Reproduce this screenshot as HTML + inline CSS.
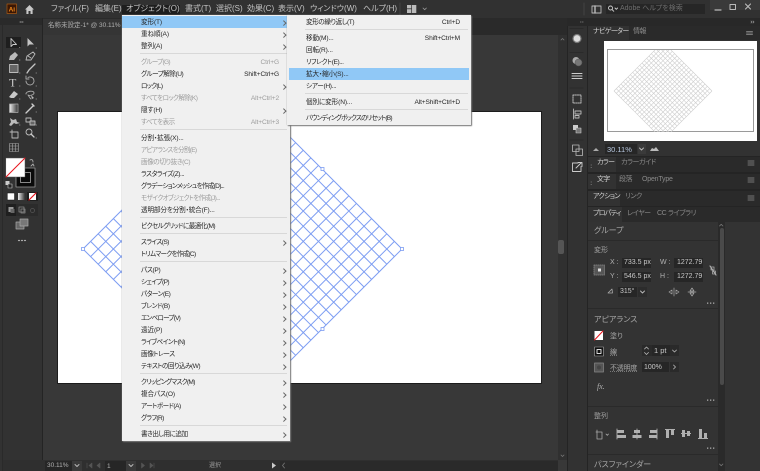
<!DOCTYPE html>
<html><head><meta charset="utf-8"><style>
html,body{margin:0;padding:0;background:#353535}
#r{position:relative;width:760px;height:471px;overflow:hidden;background:#383838;font-family:"Liberation Sans","Noto Sans CJK JP",sans-serif;font-feature-settings:"palt";filter:blur(.3px)}
.b{position:absolute}
.t{position:absolute;white-space:nowrap;height:10px;line-height:10px;font-size:7px;color:#b8b8b8}
.m{color:#c4c4c4;font-size:8px;top:4px}
.a1{font-size:7px;color:#d0d0d0;letter-spacing:-.7px}
.a2{color:#8a8a8a;letter-spacing:-.5px}
.i{position:absolute;background:#262626}
svg{position:absolute;left:0;top:0}
#menu,#sub{position:absolute;background:#f0f0f0;box-shadow:1px 1px 1px #777,0 0 1px #999;box-sizing:border-box}
#menu{left:122px;top:15px;width:168px;height:426px;padding-top:1px}
#sub{left:287px;top:15px;width:184px;height:110px;padding-top:1px}
.it{position:relative;height:12px;line-height:14px;font-size:6.6px;color:#262626;padding-left:19px;white-space:nowrap;letter-spacing:-.12px}
.it.d{color:#9c9c9c}
.it.h{background:#90c8f6}
.it b{position:absolute;right:11px;top:0;font-weight:normal;letter-spacing:-.12px}
.it.a:after{content:"";position:absolute;left:160px;top:4.5px;width:2.5px;height:2.5px;border-top:1px solid #666;border-right:1px solid #666;transform:rotate(45deg)}
.sp{height:4px;position:relative}
.sp:after{content:"";position:absolute;left:18px;right:3px;top:1px;height:1px;background:#d8d8d8}
</style></head><body><div id="r">
<!-- chrome backgrounds -->
<div class="b" style="left:0;top:0;width:760px;height:18px;background:#313131"></div>
<div class="b" style="left:0;top:18px;width:567px;height:17px;background:#2a2a2a"></div>
<div class="b" style="left:43px;top:19px;width:80px;height:16px;background:#353535"></div>
<div class="b" style="left:0;top:18px;width:42px;height:453px;background:#323232;border-right:1px solid #242424"></div>
<div class="b" style="left:0;top:18px;width:42px;height:7px;background:#2a2a2a"></div>
<div class="b" style="left:2px;top:460px;width:556px;height:11px;background:#2f2f2f"></div>
<div class="b" style="left:2px;top:18px;width:1px;height:453px;background:#2a2a2a"></div>
<!-- artboard -->
<div class="b" style="left:58px;top:112px;width:483px;height:271px;background:#fff;box-shadow:0 0 0 1px #1c1c1c"></div>
<svg width="760" height="471" viewBox="0 0 760 471">
<defs><clipPath id="ab"><rect x="58" y="112" width="483" height="271"/></clipPath><clipPath id="nv"><rect x="607" y="50" width="147" height="82"/></clipPath></defs>
<g clip-path="url(#ab)"><g transform="matrix(7.595 -7.595 7.595 7.595 83 249)" fill="none" stroke="#7d9df2" stroke-width="1"><path vector-effect="non-scaling-stroke" d="M0 0H21M0 1H21M0 2H21M0 3H21M0 4H21M0 5H21M0 6H21M0 7H21M0 8H21M0 9H21M0 10H21M0 11H21M0 12H21M0 13H21M0 14H21M0 15H21M0 16H21M0 17H21M0 18H21M0 19H21M0 20H21M0 21H21M0 0V21M1 0V21M2 0V21M3 0V21M4 0V21M5 0V21M6 0V21M7 0V21M8 0V21M9 0V21M10 0V21M11 0V21M12 0V21M13 0V21M14 0V21M15 0V21M16 0V21M17 0V21M18 0V21M19 0V21M20 0V21M21 0V21"/></g>
<g fill="#fff" stroke="#7d9df2" stroke-width=".8"><rect x="81.5" y="247.5" width="3" height="3"/><rect x="400.5" y="247.5" width="3" height="3"/><rect x="321" y="167.5" width="3" height="3"/><rect x="321" y="327.5" width="3" height="3"/></g></g>
</svg>
<!-- canvas scrollbars -->
<div class="b" style="left:558px;top:35px;width:9px;height:425px;background:#303030"></div>
<div class="b" style="left:558px;top:240px;width:6px;height:14px;background:#555;border-radius:2px"></div>
<!-- right panels -->
<div class="b" style="left:567px;top:18px;width:193px;height:453px;background:#303030"></div>
<div class="b" style="left:567px;top:18px;width:193px;height:8px;background:#282828"></div>
<div class="b" style="left:567px;top:26px;width:20px;height:445px;background:#323232;border-left:1px solid #242424;box-sizing:border-box"></div>
<div class="b" style="left:587px;top:26px;width:173px;height:445px;background:#242424"></div>
<!-- nav -->
<div class="b" style="left:588px;top:26px;width:172px;height:130px;background:#323232"></div>
<div class="b" style="left:588px;top:26px;width:172px;height:14px;background:#2a2a2a"></div>
<div class="b" style="left:588px;top:26px;width:41px;height:15px;background:#323232"></div>
<div class="b" style="left:604px;top:41px;width:153px;height:100px;background:#fff"></div>
<div class="b" style="left:607px;top:49px;width:147px;height:83px;border:1px solid #9a9a9a;box-sizing:border-box"></div>
<svg width="760" height="471" viewBox="0 0 760 471"><g clip-path="url(#nv)"><g transform="matrix(2.333 -2.333 2.333 2.333 614 91)" fill="none" stroke="#cdcdcd" stroke-width=".6"><path vector-effect="non-scaling-stroke" d="M0 0H21M0 1H21M0 2H21M0 3H21M0 4H21M0 5H21M0 6H21M0 7H21M0 8H21M0 9H21M0 10H21M0 11H21M0 12H21M0 13H21M0 14H21M0 15H21M0 16H21M0 17H21M0 18H21M0 19H21M0 20H21M0 21H21M0 0V21M1 0V21M2 0V21M3 0V21M4 0V21M5 0V21M6 0V21M7 0V21M8 0V21M9 0V21M10 0V21M11 0V21M12 0V21M13 0V21M14 0V21M15 0V21M16 0V21M17 0V21M18 0V21M19 0V21M20 0V21M21 0V21"/></g></g></svg>
<div class="i" style="left:605px;top:144px;width:32px;height:10px"></div>
<div class="i" style="left:638px;top:144px;width:8px;height:10px;background:#3a3a3a"></div>
<span class="t" style="left:607px;top:145px;font-size:7.5px;color:#b8c8e0">30.11%</span>
<!-- panel tab rows -->
<div class="b" style="left:588px;top:157px;width:172px;height:15px;background:#2a2a2a"></div>
<div class="b" style="left:588px;top:157px;width:28px;height:15px;background:#323232"></div>
<div class="b" style="left:588px;top:174px;width:172px;height:15px;background:#2a2a2a"></div>
<div class="b" style="left:588px;top:174px;width:28px;height:15px;background:#323232"></div>
<div class="b" style="left:588px;top:191px;width:172px;height:15px;background:#2a2a2a"></div>
<div class="b" style="left:588px;top:191px;width:32px;height:15px;background:#323232"></div>
<div class="b" style="left:588px;top:207px;width:172px;height:15px;background:#2a2a2a"></div>
<div class="b" style="left:588px;top:207px;width:34px;height:15px;background:#323232"></div>
<div class="b" style="left:588px;top:222px;width:172px;height:249px;background:#333"></div>
<div class="b" style="left:718px;top:222px;width:7px;height:249px;background:#2a2a2a"></div>
<div class="b" style="left:720px;top:228px;width:4px;height:157px;background:#4a4a4a;border-radius:2px"></div>
<div class="b" style="left:588px;top:240px;width:130px;height:1px;background:#2a2a2a"></div>
<div class="b" style="left:588px;top:308px;width:130px;height:1px;background:#2a2a2a"></div>
<div class="b" style="left:588px;top:406px;width:130px;height:1px;background:#2a2a2a"></div>
<div class="b" style="left:588px;top:454px;width:130px;height:1px;background:#2a2a2a"></div>
<span class="t a1" style="left:593px;top:27px">ナビゲーター</span>
<span class="t a2" style="left:633px;top:27px">情報</span>
<span class="t a1" style="left:597px;top:158px">カラー</span>
<span class="t a2" style="left:621px;top:158px">カラーガイド</span>
<span class="t a1" style="left:597px;top:175px">文字</span>
<span class="t a2" style="left:619px;top:175px">段落</span>
<span class="t a2" style="left:642px;top:175px;letter-spacing:-.2px">OpenType</span>
<span class="t a1" style="left:593px;top:192px">アクション</span>
<span class="t a2" style="left:625px;top:192px">リンク</span>
<span class="t a1" style="left:593px;top:209px">プロパティ</span>
<span class="t a2" style="left:627px;top:209px">レイヤー</span>
<span class="t a2" style="left:657px;top:209px;letter-spacing:-.4px">CC ライブラリ</span>
<span class="t" style="left:594px;top:226px;font-size:8px;color:#a8a8a8">グループ</span>
<span class="t" style="left:594px;top:246px;color:#a0a0a0">変形</span>
<div class="i" style="left:622px;top:258px;width:29px;height:10px"></div>
<div class="i" style="left:622px;top:272px;width:29px;height:10px"></div>
<div class="i" style="left:674px;top:258px;width:29px;height:10px"></div>
<div class="i" style="left:674px;top:272px;width:29px;height:10px"></div>
<div class="i" style="left:618px;top:287px;width:19px;height:10px"></div>
<div class="i" style="left:638px;top:287px;width:9px;height:10px;background:#2c2c2c"></div>
<span class="t" style="left:610px;top:258px;color:#b0b0b0">X :</span>
<span class="t" style="left:610px;top:272px;color:#b0b0b0">Y :</span>
<span class="t" style="left:660px;top:258px;color:#b0b0b0">W :</span>
<span class="t" style="left:660px;top:272px;color:#b0b0b0">H :</span>
<span class="t" style="left:624px;top:258px;color:#c8c8c8">733.5 px</span>
<span class="t" style="left:624px;top:272px;color:#c8c8c8">546.5 px</span>
<span class="t" style="left:677px;top:258px;color:#c8c8c8">1272.79</span>
<span class="t" style="left:677px;top:272px;color:#c8c8c8">1272.79</span>
<span class="t" style="left:620px;top:287px;color:#c8c8c8">315°</span>
<span class="t" style="left:594px;top:315px;font-size:8px;color:#a8a8a8">アピアランス</span>
<span class="t" style="left:610px;top:332px;color:#a8a8a8">塗り</span>
<span class="t" style="left:610px;top:348px;color:#a8a8a8;text-decoration:underline dotted #777">線</span>
<span class="t" style="left:610px;top:364px;color:#a8a8a8;letter-spacing:-.2px;text-decoration:underline dotted #777">不透明度</span>
<div class="i" style="left:642px;top:345px;width:37px;height:11px;background:#2a2a2a"></div>
<div class="i" style="left:652px;top:345px;width:18px;height:11px"></div>
<span class="t" style="left:654px;top:346px;font-size:7.5px;color:#c8c8c8">1 pt</span>
<div class="i" style="left:642px;top:362px;width:27px;height:10px"></div>
<div class="i" style="left:670px;top:362px;width:9px;height:10px;background:#2a2a2a"></div>
<span class="t" style="left:644px;top:363px;color:#c8c8c8">100%</span>
<span class="t" style="left:597px;top:382px;font-size:8px;font-style:italic;font-family:'Liberation Serif',serif;color:#b0b0b0">fx.</span>
<span class="t" style="left:594px;top:412px;color:#a0a0a0">整列</span>
<span class="t" style="left:594px;top:460px;font-size:8px;color:#a8a8a8">パスファインダー</span>
<!-- top bar text -->
<div class="b" style="left:122px;top:5px;width:58px;height:11px;background:#1e1e1e"></div>
<span class="t m" style="left:51px">ファイル(F)</span>
<span class="t m" style="left:95px">編集(E)</span>
<span class="t m" style="left:126px">オブジェクト(O)</span>
<span class="t m" style="left:185px">書式(T)</span>
<span class="t m" style="left:216px">選択(S)</span>
<span class="t m" style="left:247px">効果(C)</span>
<span class="t m" style="left:278px">表示(V)</span>
<span class="t m" style="left:310px">ウィンドウ(W)</span>
<span class="t m" style="left:363px">ヘルプ(H)</span>
<span class="t" style="left:48px;top:21px;font-size:6.5px;color:#b0b0b0">名称未設定-1* @ 30.11% (</span>
<div class="b" style="left:606px;top:4px;width:99px;height:10px;background:#262626"></div>
<span class="t" style="left:620px;top:4px;font-size:7px;color:#6f6f6f">Adobe ヘルプを検索</span>
<div class="b" style="left:710px;top:0;width:50px;height:10px;background:#3a3a3a"></div>
<!-- status bar -->
<div class="i" style="left:45px;top:461px;width:27px;height:10px"></div>
<div class="i" style="left:105px;top:461px;width:21px;height:10px"></div>
<div class="b" style="left:126px;top:461px;width:10px;height:10px;background:#3a3a3a"></div>
<div class="b" style="left:72px;top:461px;width:10px;height:10px;background:#3a3a3a"></div>
<span class="t" style="left:47px;top:461px;font-size:6.5px;color:#b0b0b0">30.11%</span>
<span class="t" style="left:107px;top:462px;font-size:6.5px;color:#b0b0b0">1</span>
<span class="t" style="left:209px;top:461px;font-size:6px;color:#9a9a9a">選択</span>
<div class="b" style="left:280px;top:461px;width:278px;height:10px;background:#2a2a2a"></div>
<!-- icons -->
<svg width="760" height="471" viewBox="0 0 760 471" fill="none" stroke-linecap="round" stroke-linejoin="round">
<rect x="7" y="4" width="9.5" height="9.5" fill="#3b1704" stroke="#a85a14" stroke-width=".7"/>
<text x="8.6" y="11.4" font-family="Liberation Sans" font-size="6.5" font-weight="bold" fill="#f08a1c" stroke="none">Ai</text>
<path d="M25 9.5L29.5 5L34 9.5H32.6V14H30.5V11H28.5V14H26.4V9.5Z" fill="#c8c8c8"/>
<rect x="407" y="5" width="4.3" height="3.4" fill="#bbb"/><rect x="412" y="5" width="4.3" height="8" fill="#bbb"/><rect x="407" y="9.2" width="4.3" height="3.8" fill="#bbb"/>
<path d="M423 8l1.7 1.7L426.4 8" stroke="#999" stroke-width=".8"/>
<path d="M400 3v12M584 3v12" stroke="#444" stroke-width="1"/>
<rect x="592" y="6" width="9" height="7" stroke="#bbb" stroke-width=".9"/><path d="M595 6v7" stroke="#bbb" stroke-width="1.4"/>
<circle cx="610.5" cy="8" r="2" stroke="#ccc" stroke-width=".9"/><path d="M612 9.5l1.8 1.8M615 8l1.3 1.3L617.6 8" stroke="#ccc" stroke-width=".9"/>
<path d="M715 10h6" stroke="#bbb" stroke-width="1.2"/><rect x="730" y="4.5" width="5.5" height="5" stroke="#bbb" stroke-width="1"/><path d="M745.5 4l5 5M750.5 4l-5 5" stroke="#bbb" stroke-width="1.1"/>
<path d="M20 22h1M22 22h1" stroke="#999"/><path d="M580.500 22h.6M582.500 22h.6M751 21l1 1-1 1M753 21l1 1-1 1" stroke="#999" stroke-width=".7"/>
<!-- tools -->
<rect x="6" y="37" width="15" height="11" fill="#1e1e1e"/>
<path d="M11 38.500V46.500L13 44.500L16.500 44.500Z" stroke="#ccc" stroke-width=".9"/>
<path d="M27.500 38V46.500L29.500 44.500L34 44.500Z" fill="#c4c4c4"/>
<path d="M9 60l1-4 5-4 3 3-4 5z" fill="#bbb"/><path d="M26 60l1-4 6-4 2 2-4 6zM28 56l3 2M33 52l2 2" stroke="#bbb" stroke-width=".9"/>
<rect x="9.500" y="64.500" width="8.500" height="8" fill="#666" stroke="#bbb" stroke-width=".9"/><path d="M27 73l2-3 6-6" stroke="#c4c4c4" stroke-width="1.300"/>
<text x="9" y="86.500" font-family="Liberation Serif" font-size="12" fill="#c8c8c8" stroke="none">T</text>
<path d="M26 81a4 4 0 1 0 2-3.500M26 76v3h3" stroke="#aaa" stroke-width=".9"/>
<path d="M9 97l5-6 4 3-4 4h-3z" fill="#c8c8c8"/><path d="M26 94c0-3 8-4 8-1 0 2-5 3-6 2l2 3 1 1" stroke="#aaa" stroke-width=".9"/><path d="M31 95l3 3-2 1z" fill="#bbb"/>
<defs><linearGradient id="g"><stop offset="0" stop-color="#eee"/><stop offset="1" stop-color="#333"/></linearGradient></defs>
<rect x="9.500" y="104" width="8.500" height="8.500" fill="url(#g)" stroke="#aaa" stroke-width=".7"/><path d="M26 113l7-7M32 104l2 2" stroke="#ccc" stroke-width="1.400"/>
<path d="M9 125l2-3-1-4 3 2 3-1 1 3 3 1-4 1-2-1-3 3z" fill="#bbb"/><rect x="26" y="118" width="5" height="4" stroke="#bbb" stroke-width=".9"/><rect x="30" y="121" width="5" height="4" stroke="#bbb" stroke-width=".9" fill="#666"/>
<path d="M10 132h8v6h-6v-8" stroke="#bbb" stroke-width=".9"/><circle cx="29" cy="132" r="3" stroke="#bbb" stroke-width=".9"/><path d="M31 134l3 3" stroke="#ccc" stroke-width="1.300"/>
<path d="M9.500 143.500h9v8h-9zM9.500 146h9M9.500 149h9M12.500 143.500v8M15.500 143.500v8" stroke="#aaa" stroke-width=".6"/>
<path d="M19.500 47.500h.5M36 48h.5M19.500 60h.5M19.500 73h.5M36 73h.5M19.500 86h.5M36 86h.5M19.500 99h.5M36 99h.5M36 112h.5M36 125h.5M19.500 125h.5M36 138h.5" stroke="#aaa" stroke-width=".8"/>
<!-- fill / stroke -->
<rect x="16" y="168" width="19" height="19" fill="#0a0a0a" stroke="#999" stroke-width=".8"/>
<rect x="20.500" y="172.500" width="10" height="10" stroke="#888" stroke-width="1"/>
<rect x="6" y="158" width="19" height="19" fill="#fff" stroke="#555" stroke-width=".5"/>
<path d="M6 177L25 158" stroke="#e8141c" stroke-width="1"/>
<path d="M30 160c2-1 3 0 3 2M31 166l2-2 1 2" stroke="#aaa" stroke-width=".9"/>
<rect x="5.500" y="181" width="4" height="4" fill="#ccc"/><rect x="8" y="184" width="4" height="4" fill="#222" stroke="#ccc" stroke-width=".6"/>
<rect x="7.500" y="193" width="7" height="7" fill="#fff" stroke="#111" stroke-width=".5"/>
<rect x="18" y="193" width="7" height="7" fill="url(#g)"/>
<rect x="27" y="192" width="11" height="9" fill="#1e1e1e"/><rect x="29" y="193" width="7" height="7" fill="#fff"/><path d="M29 200l7-7" stroke="#e8141c" stroke-width="1.200"/>
<rect x="6" y="204" width="32" height="12" fill="#2b2b2b"/><rect x="6" y="204" width="10" height="12" fill="#1f1f1f"/>
<rect x="8.500" y="207" width="5" height="5" fill="#999"/><rect x="10.500" y="209" width="4" height="4" fill="#666"/>
<rect x="19" y="207" width="5" height="5" stroke="#888" stroke-width=".8"/><rect x="21" y="209" width="4" height="4" stroke="#888" stroke-width=".8"/>
<circle cx="32.500" cy="210.500" r="2" stroke="#555" stroke-width=".8"/>
<rect x="16" y="222" width="8" height="7" fill="#666" stroke="#aaa" stroke-width=".7"/><rect x="20" y="219" width="8" height="7" fill="#777" stroke="#aaa" stroke-width=".7"/>
<path d="M18.500 240.500h1M21.500 240.500h1M24.500 240.500h1" stroke="#aaa" stroke-width="1.200"/>
<!-- dock icons -->
<path d="M570 28.500h13M570 52.500h13M570 88h13M570 140h13M570 172h13" stroke="#2a2a2a" stroke-width="1"/>
<circle cx="577" cy="38.500" r="4" fill="#ddd" stroke="#777" stroke-width="1.200"/>
<circle cx="576" cy="60.500" r="3.500" fill="#aaa"/><circle cx="578.500" cy="62.500" r="3.500" fill="#777" stroke="#555" stroke-width=".5"/>
<path d="M572 73.500h10M572 76h10M572 78.500h10" stroke="#ccc" stroke-width="1"/>
<rect x="573" y="95" width="8" height="8" stroke="#bbb" stroke-dasharray="1.200 1" stroke-width="1"/>
<path d="M573.500 109v10M575 111h6v3h-6zM575 115.500h4v2.500h-4z" stroke="#bbb" stroke-width=".9"/>
<rect x="573" y="125" width="5" height="5" fill="#ccc"/><rect x="576" y="128" width="5" height="5" fill="#777" stroke="#ccc" stroke-width=".6"/>
<rect x="572.500" y="145" width="6.500" height="6.500" stroke="#bbb" stroke-width=".8"/><rect x="576" y="149" width="6.500" height="6.500" stroke="#bbb" stroke-width=".8"/>
<path d="M578 163h-5.500v8.500h8.500v-5M576 168l5.500-5.500M578 162.500h4v4" stroke="#ccc" stroke-width=".9"/>
<!-- panel glyphs -->
<g stroke="#777" stroke-width=".9"><path d="M746.500 31.500h6M746.500 33h6M746.500 34.500h6M748 161h6M748 163h6M748 165h6M748 178h6M748 180h6M748 182h6M748 196h6M748 198h6M748 200h6"/></g>
<path d="M593 151l3-3 3 3z" fill="#aaa"/><path d="M650 151l2-3 2 1 2-2 3 4z" fill="#bbb"/><path d="M639.500 148l2 2 2-2" stroke="#bbb" stroke-width=".9"/>
<path d="M591 165h.5M591 167.500h.5M591 182h.5M591 184.500h.5" stroke="#888" stroke-width=".8"/>
<rect x="594" y="265" width="10.500" height="10" fill="#555" stroke="#888" stroke-dasharray="1 1" stroke-width=".8"/><rect x="598" y="268.500" width="3" height="3" fill="#ddd"/>
<path d="M710 266l6 9" stroke="#bbb" stroke-width="1.100"/><rect x="711" y="267" width="3" height="3" stroke="#aaa" stroke-width=".8"/><rect x="712.500" y="271" width="3" height="3" stroke="#aaa" stroke-width=".8"/>
<path d="M608 293l4-4 .5 4z" stroke="#aaa" stroke-width=".8"/><path d="M640.500 291l2 2 2-2" stroke="#bbb" stroke-width=".9"/>
<path d="M674 288v8M669 292l3-2v4zM679 292l-3-2v4z" stroke="#aaa" stroke-width=".7"/><path d="M688 292h8M692 288l-2 3h4zM692 296l-2-3h4z" stroke="#aaa" stroke-width=".7"/>
<g fill="#aaa" stroke="none"><rect x="707" y="302.500" width="1.300" height="1.300"/><rect x="710" y="302.500" width="1.300" height="1.300"/><rect x="713" y="302.500" width="1.300" height="1.300"/><rect x="707" y="399.500" width="1.300" height="1.300"/><rect x="710" y="399.500" width="1.300" height="1.300"/><rect x="713" y="399.500" width="1.300" height="1.300"/><rect x="707" y="447.500" width="1.300" height="1.300"/><rect x="710" y="447.500" width="1.300" height="1.300"/><rect x="713" y="447.500" width="1.300" height="1.300"/></g>
<rect x="594.500" y="331" width="8.500" height="9" fill="#fff"/><path d="M594.500 340l8.500-9" stroke="#e8141c" stroke-width="1"/>
<rect x="594.500" y="347" width="9" height="9" fill="#111" stroke="#aaa" stroke-width=".6"/><rect x="597" y="349.500" width="4" height="4" stroke="#ddd" stroke-width="1"/>
<rect x="594.500" y="363" width="9" height="9" fill="#555" stroke="#888" stroke-width=".7"/><circle cx="599" cy="367.500" r="2" fill="#444"/>
<path d="M644.500 349l2-2 2 2M644.500 352.500l2 2 2-2" stroke="#bbb" stroke-width=".8"/><path d="M672.500 350l2 2 2-2" stroke="#bbb" stroke-width=".8"/><path d="M673.500 365l2 2-2 2" stroke="#bbb" stroke-width=".8"/>
<path d="M596 432h6v7h-5v-9M606 434l1.300 1.300L608.500 434" stroke="#aaa" stroke-width=".8"/>
<g stroke="#b0b0b0" stroke-width=".9"><path d="M617 429v10M637 429v10M657 429v10"/></g>
<g fill="#b0b0b0" stroke="none"><rect x="617" y="430" width="7" height="3"/><rect x="617" y="435" width="9" height="3"/><rect x="634" y="430" width="6" height="3"/><rect x="632.500" y="435" width="9" height="3"/><rect x="650" y="430" width="7" height="3"/><rect x="649" y="435" width="8" height="3"/><rect x="665" y="429" width="10" height="1"/><rect x="666" y="430" width="3" height="8"/><rect x="671" y="430" width="3" height="5"/><rect x="681" y="433" width="10" height="1"/><rect x="682" y="430" width="3" height="7"/><rect x="687" y="431" width="3" height="5"/><rect x="698" y="438" width="10" height="1"/><rect x="699" y="429" width="3" height="9"/><rect x="704" y="433" width="3" height="5"/></g>
<path d="M719.500 226l1.700-1.700 1.700 1.700M719.500 464l1.700 1.700 1.700-1.700M561 40l1.500-1.500L564 40M561 455l1.500 1.500 1.500-1.500" stroke="#777" stroke-width=".8"/>
<!-- status glyphs -->
<path d="M75 464.500l2 2 2-2M129 464.500l2 2 2-2" stroke="#bbb" stroke-width=".9"/>
<g stroke="#555" fill="#555" stroke-width=".6"><path d="M87 463v5M92 463l-3 2.500 3 2.500zM100 463l-3 2.500 3 2.500zM141.500 463l3 2.500-3 2.500zM150 463l3 2.500-3 2.500zM154 463v5"/></g>
<path d="M272 462.500l4 3-4 3z" fill="#ccc"/><path d="M284.500 463l-2 2.500 2 2.500" stroke="#777" stroke-width=".8"/>
</svg>
<!-- main menu -->
<div id="menu">
<div class="it h a">変形(T)</div>
<div class="it a">重ね順(A)</div>
<div class="it a">整列(A)</div>
<div class="sp"></div>
<div class="it d" style="letter-spacing:-.7px">グループ(G)<b>Ctrl+G</b></div>
<div class="it" style="letter-spacing:-.5px">グループ解除(U)<b>Shift+Ctrl+G</b></div>
<div class="it a" style="letter-spacing:-.7px">ロック(L)</div>
<div class="it d" style="letter-spacing:-.6px">すべてをロック解除(K)<b>Alt+Ctrl+2</b></div>
<div class="it a">隠す(H)</div>
<div class="it d" style="letter-spacing:-.6px">すべてを表示<b>Alt+Ctrl+3</b></div>
<div class="sp"></div>
<div class="it">分割・拡張(X)...</div>
<div class="it d" style="letter-spacing:-.7px">アピアランスを分割(E)</div>
<div class="it d" style="letter-spacing:-.4px">画像の切り抜き(C)</div>
<div class="it" style="letter-spacing:-.45px">ラスタライズ(Z)...</div>
<div class="it" style="letter-spacing:-.72px">グラデーションメッシュを作成(D)...</div>
<div class="it d" style="letter-spacing:-.67px">モザイクオブジェクトを作成(J)...</div>
<div class="it" style="letter-spacing:-.15px">透明部分を分割・統合(F)...</div>
<div class="sp"></div>
<div class="it" style="letter-spacing:-.55px">ピクセルグリッドに最適化(M)</div>
<div class="sp"></div>
<div class="it a" style="letter-spacing:-.6px">スライス(S)</div>
<div class="it" style="letter-spacing:-.75px">トリムマークを作成(C)</div>
<div class="sp"></div>
<div class="it a" style="letter-spacing:-.3px">パス(P)</div>
<div class="it a" style="letter-spacing:-.6px">シェイプ(P)</div>
<div class="it a" style="letter-spacing:-.5px">パターン(E)</div>
<div class="it a" style="letter-spacing:-.4px">ブレンド(B)</div>
<div class="it a" style="letter-spacing:-.8px">エンベロープ(V)</div>
<div class="it a">遠近(P)</div>
<div class="it a" style="letter-spacing:-.6px">ライブペイント(N)</div>
<div class="it a" style="letter-spacing:-.4px">画像トレース</div>
<div class="it a" style="letter-spacing:-.5px">テキストの回り込み(W)</div>
<div class="sp"></div>
<div class="it a" style="letter-spacing:-.7px">クリッピングマスク(M)</div>
<div class="it a">複合パス(O)</div>
<div class="it a" style="letter-spacing:-.5px">アートボード(A)</div>
<div class="it a" style="letter-spacing:-.6px">グラフ(R)</div>
<div class="sp"></div>
<div class="it a" style="letter-spacing:-.5px">書き出し用に追加</div>
</div>
<div id="sub">
<div class="it" style="letter-spacing:-.4px">変形の繰り返し(T)<b>Ctrl+D</b></div>
<div class="sp"></div>
<div class="it">移動(M)...<b>Shift+Ctrl+M</b></div>
<div class="it">回転(R)...</div>
<div class="it" style="letter-spacing:-.4px">リフレクト(E)...</div>
<div class="it h" style="margin:0 2px;padding-left:17px">拡大・縮小(S)...</div>
<div class="it" style="letter-spacing:-.3px">シアー(H)...</div>
<div class="sp"></div>
<div class="it">個別に変形(N)...<b>Alt+Shift+Ctrl+D</b></div>
<div class="sp"></div>
<div class="it" style="letter-spacing:-.8px">バウンディングボックスのリセット(B)</div>
</div>
</div></body></html>
